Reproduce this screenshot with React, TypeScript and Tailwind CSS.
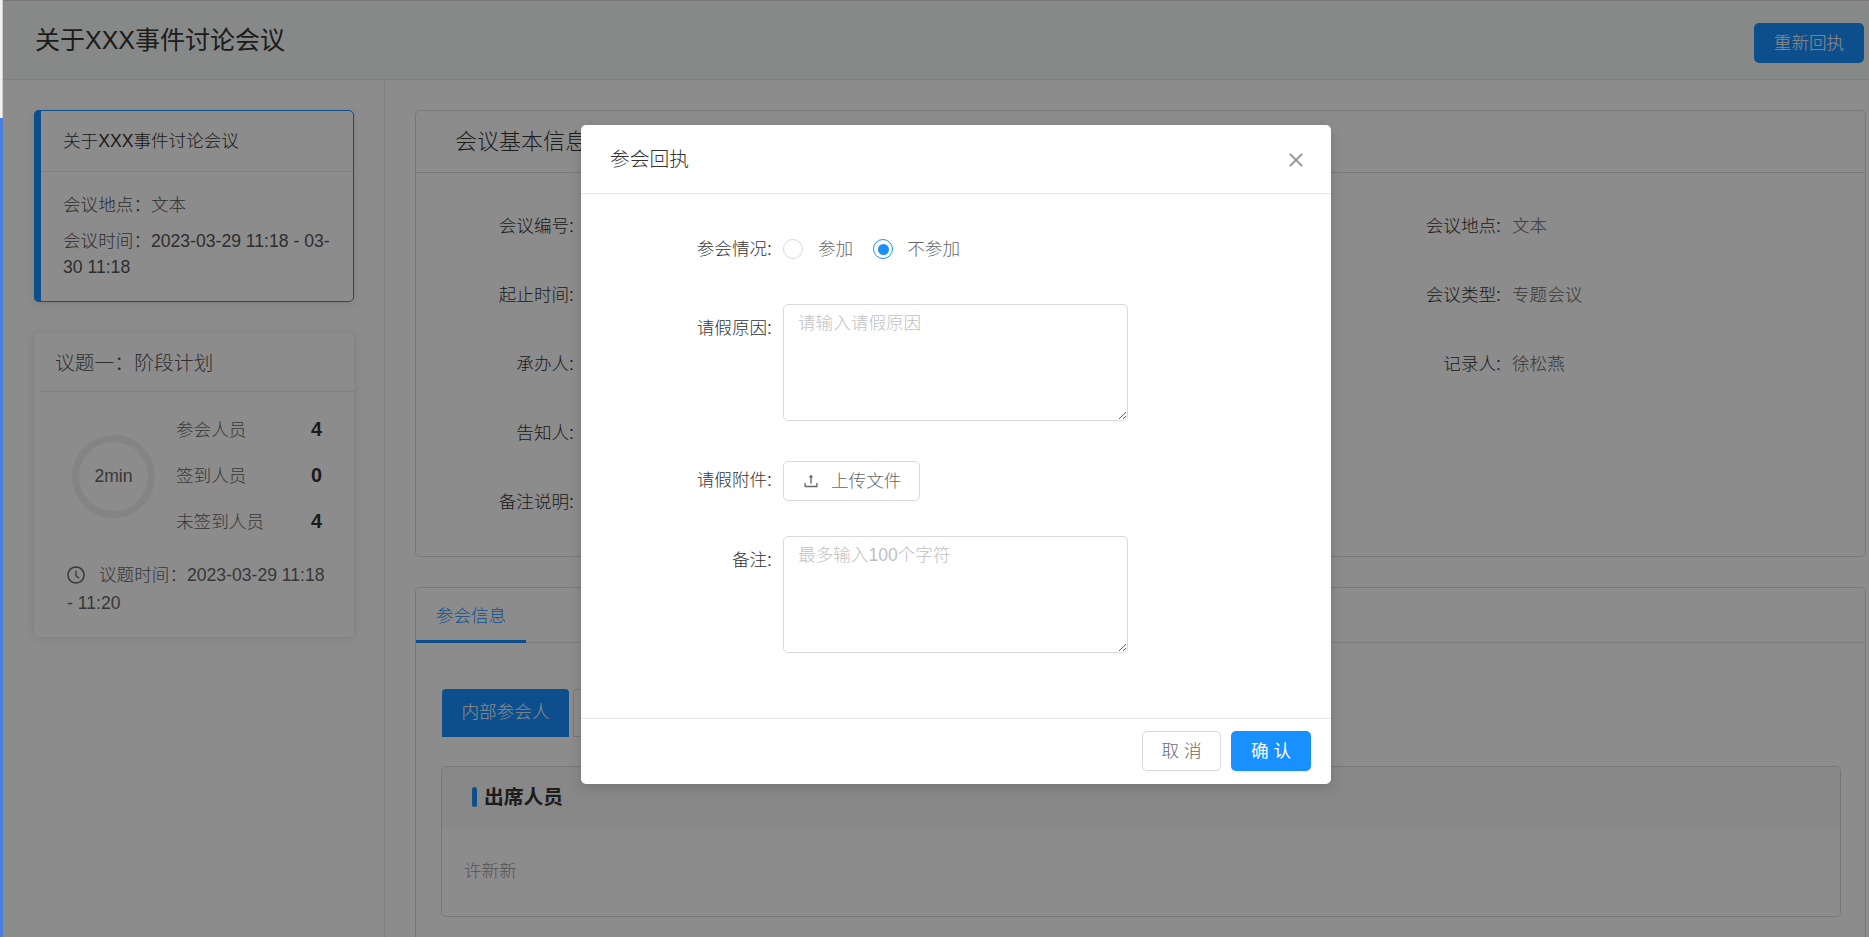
import { AiOutlineClockCircle, AiOutlineClose, AiOutlineUpload } from "react-icons/ai"

const detailRows = [
  { left: "会议编号:", right: "会议地点:", value: "文本" },
  { left: "起止时间:", right: "会议类型:", value: "专题会议" },
  { left: "承办人:", right: "记录人:", value: "徐松燕" },
  { left: "告知人:" },
  { left: "备注说明:" },
]

const stats = [
  { label: "参会人员", count: 4 },
  { label: "签到人员", count: 0 },
  { label: "未签到人员", count: 4 },
]

function Sidebar() {
  return (
    <aside className="w-[382px] shrink-0 border-r border-[#e8e8e8] bg-white pt-[30px] pl-[31px] pr-[30px]">
      <div className="relative h-[192px] rounded-[5px] border border-[#1890ff] pl-[6px] shadow-[0_2px_8px_rgba(0,0,0,0.1)]">
        <div className="absolute -left-px -top-px -bottom-px w-[7px] rounded-l-[5px] bg-[#1890ff]" />
        <div className="flex h-[61px] items-center border-b border-[#e8e8e8] pl-[22px] text-[17.6px] text-[#333]">
          关于XXX事件讨论会议
        </div>
        <div className="pl-[22px] pr-[12px] pt-[20px] text-[17.6px] leading-[26px] text-[#555]">
          <p className="mb-[10px] h-[26px]">会议地点&#xFF1A;文本</p>
          <p>会议时间&#xFF1A;2023-03-29 11:18 - 03-30 11:18</p>
        </div>
      </div>

      <div className="mt-[31px] h-[304px] rounded-[5px] bg-white shadow-[0_1px_10px_rgba(0,0,0,0.12)]">
        <div className="ml-[7px] flex h-[59px] items-center border-b border-[#e8e8e8] pl-[14px] pt-[3px] text-[19.8px] text-[#555]">
          议题一&#xFF1A;阶段计划
        </div>
        <div className="flex items-center pl-[38px] pt-[15px]">
          <div className="flex h-[83px] w-[83px] shrink-0 items-center justify-center rounded-full border-[7px] border-[#f0f0f0] text-[17.6px] text-[#666]">
            2min
          </div>
          <div className="ml-[21px] w-[146px]">
            {stats.map((s) => (
              <div key={s.label} className="flex h-[46px] items-center justify-between text-[17.6px] text-[#666]">
                <span>{s.label}</span>
                <span className="text-[19.8px] font-bold text-[#333]">{s.count}</span>
              </div>
            ))}
          </div>
        </div>
        <div className="relative mt-[16px] pl-[33px] pr-[20px] text-[17.6px] leading-[28px] text-[#666]">
          <AiOutlineClockCircle className="absolute left-[32px] top-[4px] h-[20px] w-[20px]" />
          <p className="indent-[32px]">议题时间&#xFF1A;2023-03-29 11:18 - 11:20</p>
        </div>
      </div>
    </aside>
  )
}

function MeetingInfo() {
  return (
    <section className="h-[447px] rounded-[5px] border border-[#d9d9d9]">
      <div className="flex h-[62px] items-center border-b border-[#d9d9d9] pl-[39px] text-[22px] text-[#333]">
        会议基本信息
      </div>
      <div className="grid grid-cols-[925px_1fr] pt-[20px] text-[17.6px]">
        {detailRows.map((row) => (
          <div key={row.left} className="contents">
            <div className="h-[69px] pt-[20px] pr-[767px] text-right leading-[26px] text-[#333]">{row.left}</div>
            <div className="flex h-[69px] pt-[20px] leading-[26px]">
              {row.right && (
                <>
                  <span className="w-[160px] text-right text-[#333]">{row.right}</span>
                  <span className="ml-[11px] text-[#666]">{row.value}</span>
                </>
              )}
            </div>
          </div>
        ))}
      </div>
    </section>
  )
}

function Attendees() {
  return (
    <section className="mt-[30px] min-h-[400px] rounded-[5px] border border-[#d9d9d9]">
      <div className="h-[55px] border-b border-[#e8e8e8]">
        <div className="flex h-[55px] w-[110px] items-center justify-center border-b-[3px] border-[#1890ff] pt-[4px] text-[17.6px] text-[#1890ff]">
          参会信息
        </div>
      </div>
      <div className="pl-[25px] pr-[24px] pt-[46px]">
        <div className="ml-[1px] flex gap-[4px]">
          <div className="flex h-[48px] w-[127px] items-center justify-center rounded-t-[4px] bg-[#1890ff] pb-[2px] text-[17.6px] text-white">
            内部参会人
          </div>
          <div className="flex h-[48px] w-[127px] items-center justify-center rounded-t-[4px] border border-[#d9d9d9] pb-[2px] text-[17.6px] text-[#666]">
            外部参会人
          </div>
        </div>
        <div className="mt-[29px] h-[151px] rounded-[5px] border border-[#d9d9d9]">
          <div className="flex h-[60px] items-center rounded-t-[5px] bg-[#f8f8f8] pl-[30px]">
            <span className="h-[20px] w-[5px] rounded-full bg-[#1890ff]" />
            <span className="ml-[7px] pt-[2px] text-[19.8px] font-bold text-[#333]">出席人员</span>
          </div>
          <div className="pl-[22px] pt-[31px] text-[17.6px] leading-[26px] text-[#999]">许新新</div>
        </div>
      </div>
    </section>
  )
}

function FormRow({
  label,
  labelClass,
  className,
  children,
}: {
  label: string
  labelClass: string
  className?: string
  children: React.ReactNode
}) {
  return (
    <div className={`flex ${className ?? ""}`}>
      <label className={`w-[191px] shrink-0 text-right leading-[26px] text-[#333] ${labelClass}`}>{label}</label>
      <div className="ml-[11px]">{children}</div>
    </div>
  )
}

function ReceiptModal() {
  return (
    <div className="h-[659px] w-[750px] rounded-[5px] bg-white text-[17.6px] shadow-[0_4px_12px_rgba(0,0,0,0.15)]">
      <div className="flex h-[69px] items-center justify-between border-b border-[#e8e8e8] pl-[29px] pr-[25px]">
        <h2 className="pt-[1px] text-[19.8px] font-light text-[#333]">参会回执</h2>
        <AiOutlineClose className="mt-[2px] h-[20px] w-[20px] text-[#8c8c8c]" />
      </div>
      <div className="h-[524px] pt-[35px]">
        <FormRow label="参会情况:" labelClass="pt-[7px]" className="h-[40px]">
          <div className="flex h-[40px] items-center text-[#666]">
            <span className="h-[20px] w-[20px] rounded-full border border-[#d9d9d9]" />
            <span className="ml-[15px]">参加</span>
            <span className="ml-[20px] flex h-[20px] w-[20px] items-center justify-center rounded-full border border-[#1890ff]">
              <span className="h-[11px] w-[11px] rounded-full bg-[#1890ff]" />
            </span>
            <span className="ml-[14px]">不参加</span>
          </div>
        </FormRow>
        <FormRow label="请假原因:" labelClass="pt-[11px]" className="mt-[35px]">
          <textarea
            placeholder="请输入请假原因"
            className="block h-[117px] w-[345px] rounded-[5px] border border-[#d9d9d9] px-[14px] py-[5px] leading-[26px] outline-none placeholder:text-[#bfbfbf]"
          />
        </FormRow>
        <FormRow label="请假附件:" labelClass="pt-[6px]" className="mt-[40px]">
          <button className="flex h-[40px] w-[137px] items-center rounded-[5px] border border-[#d9d9d9] pl-[18px] text-[#666] shadow-[0_2px_0_rgba(0,0,0,0.015)]">
            <AiOutlineUpload className="h-[18px] w-[18px]" />
            <span className="ml-[11px]">上传文件</span>
          </button>
        </FormRow>
        <FormRow label="备注:" labelClass="pt-[11px]" className="mt-[35px]">
          <textarea
            placeholder="最多输入100个字符"
            className="block h-[117px] w-[345px] rounded-[5px] border border-[#d9d9d9] px-[14px] py-[5px] leading-[26px] outline-none placeholder:text-[#bfbfbf]"
          />
        </FormRow>
      </div>
      <div className="flex h-[66px] justify-end gap-[10px] border-t border-[#e8e8e8] pr-[20px] pt-[12px]">
        <button className="h-[40px] w-[79px] rounded-[5px] border border-[#d9d9d9] text-[#666] shadow-[0_2px_0_rgba(0,0,0,0.015)]">
          取 消
        </button>
        <button className="h-[40px] w-[80px] rounded-[5px] bg-[#1890ff] font-normal text-white shadow-[0_2px_0_rgba(0,0,0,0.045)]">
          确 认
        </button>
      </div>
    </div>
  )
}

export default function App() {
  return (
    <div className="flex h-[937px] overflow-hidden bg-white font-['Liberation_Sans','Noto_Sans_CJK_SC',sans-serif] font-light">
      <div className="flex w-[3px] shrink-0 flex-col">
        <div className="h-[118px] border-r border-[#cfcfcf] bg-[#f2f2f2]" />
        <div className="flex-1 bg-[#4a7fe0]" />
      </div>

      <div className="relative flex min-w-0 flex-1 flex-col">
        <header className="flex h-[80px] shrink-0 items-start justify-between border-y border-t-[#d9d9d9] border-b-[#e8e8e8] bg-[#f5f9f7] pl-[32px] pr-[5px]">
          <h1 className="pt-[21px] text-[25px] font-normal leading-[36px] text-[#333]">关于XXX事件讨论会议</h1>
          <button className="mt-[22px] h-[40px] w-[110px] rounded-[5px] bg-[#1890ff] text-[17.6px] text-white">
            重新回执
          </button>
        </header>
        <div className="flex min-h-0 flex-1">
          <Sidebar />
          <main className="min-w-0 flex-1 pl-[30px] pr-[3px] pt-[30px]">
            <MeetingInfo />
            <Attendees />
          </main>
        </div>

        <div className="absolute inset-0 bg-black/45 pl-[578px] pt-[125px]">
          <ReceiptModal />
        </div>
      </div>
    </div>
  )
}
